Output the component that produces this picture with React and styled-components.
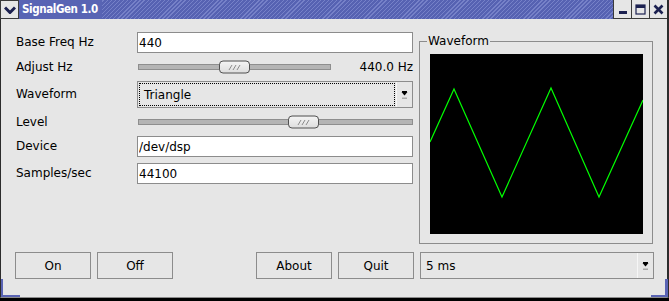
import React from 'react';
import styled, { createGlobalStyle } from 'styled-components';

const Global = createGlobalStyle`
html, body {
  margin: 0;
  padding: 0;
  background: #000;
}
* { box-sizing: border-box; }
`;

const Window = styled.div`
width: 669px;
height: 298px;
display: flex;
flex-direction: column;
font-family: "DejaVu Sans", "Liberation Sans", sans-serif;
font-size: 12px;
color: #000;
position: relative;
`;

const TitleBar = styled.div`
height: 19px;
display: flex;
align-items: stretch;
background: #5864b4;
border-right: 2px solid #2c2c2c;
`;

const MenuButton = styled.div`
width: 19px;
background: #e6e6e6;
border: 1px solid #3a3a3a;
display: flex;
align-items: center;
justify-content: center;
`;

const Title = styled.div`
color: #fff;
font-family: "DejaVu Sans Condensed", "DejaVu Sans", sans-serif;
font-stretch: condensed;
font-weight: bold;
font-size: 11.5px;
letter-spacing: -0.4px;
line-height: 19px;
padding: 0 4px 0 3px;
`;

const Stripes = styled.div`
flex: 1;
background: repeating-linear-gradient(
  -45deg,
  #5662b2 0px,
  #5662b2 2px,
  #7681c8 2px,
  #7681c8 2.9px
);
`;

const WinButton = styled.div`
width: 18px;
background: #e6e6e6;
border-left: 1px solid #3a3a3a;
border-bottom: 1px solid #3a3a3a;
display: flex;
align-items: center;
justify-content: center;
`;

const Body = styled.div`
flex: 1;
background: #e6e6e6;
border-left: 1px solid #2c2c2c;
border-right: 2px solid #2c2c2c;
border-bottom: 1px solid #8c8c8c;
padding: 13px 13px 0 14px;
display: flex;
flex-direction: column;
`;

const Top = styled.div`
display: flex;
gap: 6px;
align-items: flex-start;
`;

const Form = styled.div`
width: 398px;
display: flex;
flex-direction: column;
`;

const Row = styled.div`
height: ${p => p.$h}px;
display: grid;
grid-template-columns: 122px 276px;
align-items: ${p => p.$align || 'center'};
`;

const Label = styled.div`
padding-left: 1px;
line-height: 21px;
white-space: nowrap;
`;

const Input = styled.input`
width: 276px;
height: 21px;
border: 1px solid #8c8c8c;
background: #fff;
padding: 0 1px;
font-family: "DejaVu Sans", sans-serif;
font-size: 12px;
color: #000;
outline: none;
`;

const SliderRow = styled.div`
display: flex;
align-items: center;
`;

const Track = styled.div`
position: relative;
width: ${p => p.$w}px;
height: 6px;
margin-left: 1px;
background: #b4b4b4;
border: 1px solid #8e8e8e;
`;

const Thumb = styled.div`
position: absolute;
top: 50%;
transform: translateY(-50%);
width: 31px;
height: 13px;
border: 1px solid #505050;
border-radius: 4px;
background: linear-gradient(#f4f4f4, #dedede);
display: flex;
align-items: center;
justify-content: center;
`;

const Value = styled.div`
flex: 1;
text-align: right;
`;

const Combo = styled.div`
width: ${p => p.$w}px;
height: 27px;
border: 1px solid #8c8c8c;
background: #e6e6e6;
display: flex;
align-items: stretch;
`;

const ComboText = styled.div`
flex: 1;
margin: 1px;
padding-left: ${p => p.$focus ? '4px' : '3px'};
border: 1px dotted ${p => p.$focus ? '#000' : 'transparent'};
display: flex;
align-items: center;
`;

const ComboArrow = styled.div`
width: 16px;
border-left: 1px solid #f6f6f6;
display: flex;
align-items: center;
justify-content: center;
`;

const Frame = styled.fieldset`
margin: 2px 0 0 0;
width: 234px;
padding: 0;
border: 1px solid #8c8c8c;
min-width: 0;
`;

const Legend = styled.legend`
margin-left: 7px;
padding: 0 1px;
line-height: 14px;
font-size: 12px;
`;

const Scope = styled.svg`
display: block;
margin: 6px 9px 9px 10px;
background: #000;
`;

const BottomBar = styled.div`
margin-top: 8px;
display: flex;
align-items: center;
gap: 6px;
`;

const Spacer = styled.div`
flex: 1;
`;

const Button = styled.div`
width: 76px;
height: 27px;
border: 1px solid #8c8c8c;
background: #e6e6e6;
display: flex;
align-items: center;
justify-content: center;
`;

const CornerLeft = styled.div`
position: absolute;
left: 1px;
bottom: 1px;
width: 19px;
height: 18px;
border-left: 2px solid #5a64b4;
border-bottom: 2px solid #5a64b4;
`;

const CornerRight = styled.div`
position: absolute;
right: 1px;
bottom: 1px;
width: 17px;
height: 18px;
border-right: 3px solid #5a64b4;
border-bottom: 2px solid #5a64b4;
`;

const navy = '#1c2150';

const Grip = () => (
  <svg width="13" height="6" viewBox="0 0 13 6">
    <g stroke="#8a8a8a" strokeWidth="1">
      <line x1="1" y1="5.5" x2="4" y2="0.5" />
      <line x1="5" y1="5.5" x2="8" y2="0.5" />
      <line x1="9" y1="5.5" x2="12" y2="0.5" />
    </g>
  </svg>
);

const Slider = ({ width, value }) => (
  <Track $w={width}>
    <Thumb style={{ left: Math.round(value * (width - 31)) - 1 }}>
      <Grip />
    </Thumb>
  </Track>
);

const Arrow = () => (
  <svg width="7" height="10" viewBox="0 0 7 10">
    <path d="M0.5 2 H6.5 L3.5 5.5 Z" fill="#000" />
    <rect x="1" y="1" width="5" height="1" fill="#000" />
    <rect x="1" y="7.5" width="5" height="1.5" fill="#a8a8a8" />
  </svg>
);

const wave = [[0, 88], [24, 35], [72, 143], [121, 34], [169, 143], [213, 46]]
  .map(p => p.join(',')).join(' ');

export default function App() {
  return (
    <>
      <Global />
      <Window>
        <TitleBar>
          <MenuButton>
            <svg width="12" height="8" viewBox="0 0 12 8">
              <path d="M1 1.5 L6 6.5 L11 1.5" stroke={navy} strokeWidth="3" fill="none" />
            </svg>
          </MenuButton>
          <Title>SignalGen 1.0</Title>
          <Stripes />
          <WinButton>
            <svg width="10" height="12" viewBox="0 0 10 12">
              <rect x="1" y="8" width="8" height="3" fill={navy} />
            </svg>
          </WinButton>
          <WinButton>
            <svg width="11" height="11" viewBox="0 0 11 11">
              <rect x="1" y="1" width="9" height="9" fill="none" stroke={navy} strokeWidth="1.2" />
              <rect x="1" y="1" width="9" height="3" fill={navy} />
            </svg>
          </WinButton>
          <WinButton>
            <svg width="11" height="11" viewBox="0 0 11 11">
              <path d="M1.5 1.5 L9.5 9.5 M9.5 1.5 L1.5 9.5" stroke={navy} strokeWidth="2.6" />
            </svg>
          </WinButton>
        </TitleBar>
        <Body>
          <Top>
            <Form>
              <Row $h={21}>
                <Label>Base Freq Hz</Label>
                <Input readOnly value="440" />
              </Row>
              <Row $h={28}>
                <Label>Adjust Hz</Label>
                <SliderRow>
                  <Slider width={193} value={0.5} />
                  <Value>440.0 Hz</Value>
                </SliderRow>
              </Row>
              <Row $h={27}>
                <Label>Waveform</Label>
                <Combo $w={276}>
                  <ComboText $focus>Triangle</ComboText>
                  <ComboArrow><Arrow /></ComboArrow>
                </Combo>
              </Row>
              <Row $h={28}>
                <Label>Level</Label>
                <SliderRow>
                  <Slider width={275} value={0.615} />
                </SliderRow>
              </Row>
              <Row $h={21}>
                <Label>Device</Label>
                <Input readOnly value="/dev/dsp" />
              </Row>
              <Row $h={27} $align="end">
                <Label>Samples/sec</Label>
                <Input readOnly value="44100" />
              </Row>
            </Form>
            <Frame>
              <Legend>Waveform</Legend>
              <Scope width="213" height="180" viewBox="0 0 213 180">
                <polyline points={wave} fill="none" stroke="#00ff00" strokeWidth="1.2" />
              </Scope>
            </Frame>
          </Top>
          <BottomBar>
            <Button>On</Button>
            <Button>Off</Button>
            <Spacer />
            <Button>About</Button>
            <Button>Quit</Button>
            <Combo $w={234}>
              <ComboText>5 ms</ComboText>
              <ComboArrow><Arrow /></ComboArrow>
            </Combo>
          </BottomBar>
        </Body>
        <CornerLeft />
        <CornerRight />
      </Window>
    </>
  );
}
